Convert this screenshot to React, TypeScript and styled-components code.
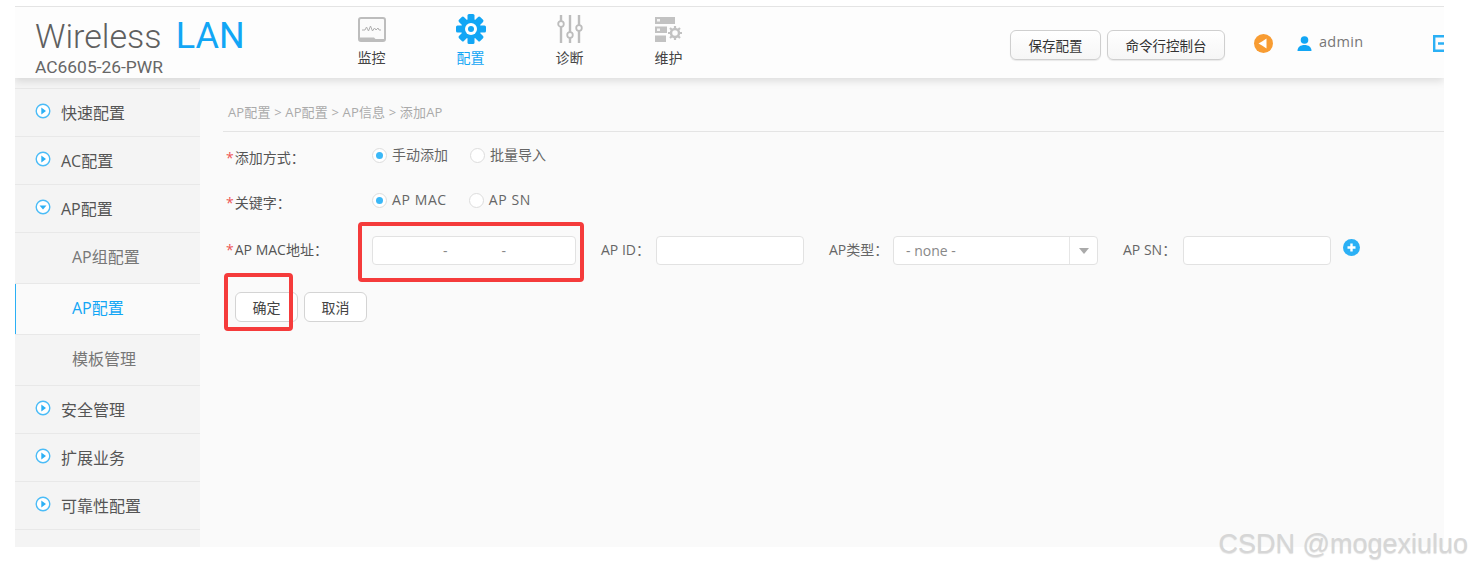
import { FC } from 'react';
import styled, { createGlobalStyle } from 'styled-components';

const BLUE = '#2bb0f5';
const CJK = "'Open Sans', 'Noto Sans CJK SC', sans-serif";

const GlobalStyle = createGlobalStyle`
  html, body {
    margin: 0;
    background: #fff;
    font-family: ${CJK};
  }
  * {
    box-sizing: border-box;
  }
`;

const Page = styled.div`
  position: relative;
  width: 1472px;
  height: 570px;
  overflow: hidden;
  padding: 6px 0 0 15px;
`;

const Frame = styled.div`
  width: 1429px;
  height: 541px;
  display: flex;
  flex-direction: column;
  overflow: hidden;
  border-top: 1px solid #e4e4e4;
`;

const Header = styled.header`
  position: relative;
  z-index: 1;
  height: 71px;
  flex: none;
  display: flex;
  background: #fdfdfd;
  box-shadow: 0 3px 8px rgba(0, 0, 0, 0.12);
`;

const Brand = styled.div`
  width: 307px;
  padding: 8px 0 0 20px;
`;

const BrandTitle = styled.div`
  font-family: Roboto, sans-serif;
  font-weight: 300;
  font-size: 34px;
  line-height: 42px;
  color: #5f5f5f;
  white-space: nowrap;
  span {
    color: #12a6f5;
    margin-left: 6px;
    font-size: 36px;
    font-weight: 400;
  }
`;

const BrandModel = styled.div`
  font-family: Roboto, sans-serif;
  font-size: 17.400px;
  line-height: 20px;
  color: #666;
`;

const Nav = styled.nav`
  display: flex;
  padding-top: 7px;
`;

const NavItem = styled.div<{ $active?: boolean }>`
  width: 99px;
  display: flex;
  flex-direction: column;
  align-items: center;
  font-size: 14px;
  line-height: 20px;
  color: ${(p) => (p.$active ? '#12a6f5' : '#444')};
`;

const NavIcon = styled.div`
  height: 30px;
  margin-bottom: 4px;
  display: flex;
  align-items: center;
  justify-content: center;
`;

const Tools = styled.div`
  margin-left: auto;
  display: flex;
  align-items: center;
  padding-top: 4px;
  width: 434px;
  flex: none;
`;

const ToolButton = styled.button<{ $w: number }>`
  width: ${(p) => p.$w}px;
  height: 30px;
  flex: none;
  margin-right: 6px;
  padding: 0;
  border: 1px solid #cfcfcf;
  border-radius: 6px;
  background: linear-gradient(#fff, #f6f6f6);
  box-shadow: 0 1px 1px rgba(0, 0, 0, 0.08);
  font-family: ${CJK};
  font-size: 13.500px;
  color: #333;
`;

const SpeakerSvg = styled.svg`
  width: 19px;
  height: 19px;
  flex: none;
  margin: -3px 0 0 23px;
`;

const UserSvg = styled.svg`
  width: 15px;
  height: 15px;
  flex: none;
  margin: -3px 0 0 24px;
`;

const UserName = styled.span`
  font-size: 14.500px;
  line-height: 20px;
  color: #777;
  margin: -5px 0 0 7px;
  letter-spacing: 0.3px;
`;

const LogoutSvg = styled.svg`
  width: 17px;
  height: 17px;
  flex: none;
  margin: -3px 0 0 70px;
`;

const Body = styled.div`
  flex: 1;
  display: flex;
  min-height: 0;
`;

const Sidebar = styled.aside`
  width: 185px;
  flex: none;
  background: #f4f4f4;
  padding-top: 10px;
`;

const MenuRow = styled.div<{ $sub?: boolean; $active?: boolean }>`
  display: flex;
  align-items: center;
  height: ${(p) => (p.$sub ? 51 : 48)}px;
  padding-left: ${(p) => (p.$sub ? 57 : 20)}px;
  padding-bottom: ${(p) => (p.$sub ? 5 : 1)}px;
  border-top: 1px solid #e8e8e8;
  background: ${(p) => (p.$active ? '#fafafa' : 'transparent')};
  box-shadow: ${(p) => (p.$active ? `inset 1px 0 0 ${BLUE}` : 'none')};
  font-size: 16px;
  color: ${(p) => (p.$active ? '#12a6f5' : p.$sub ? '#777' : '#555')};
  &:last-child {
    border-bottom: 1px solid #e8e8e8;
    height: 49px;
  }
`;

const MenuIcon = styled.svg`
  width: 16px;
  height: 16px;
  margin: -3px 10px 0 0;
  flex: none;
`;

const Content = styled.main`
  flex: 1;
  background: #fafafa;
  padding-left: 23px;
`;

const Breadcrumb = styled.div`
  height: 54px;
  padding: 25px 0 0 5px;
  font-size: 13px;
  line-height: 18px;
  letter-spacing: 0.15px;
  color: #aaa;
  border-bottom: 1px solid #e4e4e4;
  margin-bottom: 12px;
`;

const Row = styled.div<{ $h: number }>`
  display: flex;
  align-items: flex-start;
  height: ${(p) => p.$h}px;
`;

const RowLabel = styled.label`
  width: 149px;
  flex: none;
  padding: 5px 0 0 3px;
  font-size: 14px;
  line-height: 18px;
  color: #555;
  white-space: nowrap;
  em {
    color: #e55;
    font-style: normal;
    margin-right: 1px;
  }
`;

const RadioGroup = styled.div`
  display: flex;
  align-items: center;
  height: 22px;
`;

const RadioDot = styled.span<{ $on?: boolean }>`
  width: 15px;
  height: 15px;
  margin-right: 5px;
  border: 1px solid #ddd;
  border-radius: 50%;
  background: #fff;
  display: flex;
  align-items: center;
  justify-content: center;
  &::after {
    content: '';
    width: 7px;
    height: 7px;
    border-radius: 50%;
    background: ${(p) => (p.$on ? '#3bb8f7' : 'transparent')};
  }
`;

const RadioText = styled.span<{ $latin?: boolean }>`
  font-size: 14px;
  line-height: 18px;
  letter-spacing: ${(p) => (p.$latin ? 0.6 : 0)}px;
  color: #666;
  margin-right: 22px;
  white-space: nowrap;
`;

const TextBox = styled.div<{ $w: number }>`
  width: ${(p) => p.$w}px;
  height: 29px;
  flex: none;
  display: flex;
  align-items: center;
  background: #fff;
  border: 1px solid #e2e2e2;
  border-radius: 4px;
  font-size: 14px;
  color: #888;
`;

const MacDash = styled.span<{ $left: number }>`
  margin-left: ${(p) => p.$left}px;
`;

const FieldLabel = styled.label<{ $w: number; $gap: number }>`
  width: ${(p) => p.$w}px;
  margin-left: ${(p) => p.$gap}px;
  flex: none;
  font-size: 14px;
  line-height: 28px;
  color: #666;
  white-space: nowrap;
`;

const SelectValue = styled.span`
  flex: 1;
  padding-left: 12px;
`;

const SelectArrow = styled.span`
  width: 28px;
  height: 100%;
  border-left: 1px solid #e6e6e6;
  display: flex;
  align-items: center;
  justify-content: center;
  &::after {
    content: '';
    border: 5px solid transparent;
    border-top: 6px solid #aaa;
    border-bottom: 0;
  }
`;

const AddIcon = styled.svg`
  width: 17px;
  height: 17px;
  margin: 3px 0 0 12px;
`;

const Actions = styled.div`
  display: flex;
  gap: 6px;
  padding: 8px 0 0 12px;
`;

const ActionButton = styled.button`
  width: 63px;
  height: 30px;
  padding: 0;
  border: 1px solid #d4d4d4;
  border-radius: 6px;
  background: #fff;
  font-family: ${CJK};
  font-size: 14px;
  color: #444;
`;

const Highlight = styled.div<{ $x: number; $y: number; $w: number; $h: number }>`
  position: absolute;
  left: ${(p) => p.$x}px;
  top: ${(p) => p.$y}px;
  width: ${(p) => p.$w}px;
  height: ${(p) => p.$h}px;
  border: 4px solid #f53b3b;
  border-radius: 4px;
`;

const Watermark = styled.div`
  position: absolute;
  right: 4px;
  bottom: 10px;
  font-family: 'Liberation Sans', sans-serif;
  font-size: 27px;
  line-height: 32px;
  color: #d6d6d6;
  text-shadow: 0 1px 1px rgba(0, 0, 0, 0.12);
  white-space: nowrap;
`;

const MonitorGlyph: FC = () => (
  <svg width="28" height="25" viewBox="0 0 28 25" fill="none">
    <rect x="1" y="1" width="26" height="23" rx="2" fill="#fbfbfb" stroke="#bdbdbd" strokeWidth="2" />
    <path d="M4 13h3l1.500-3 2 4 2-5 2 5 2-3 1.500 2 2-2 1 2h2" stroke="#b0b0b0" strokeWidth="1" />
    <path d="M1 20.500h15l1.500 1.500h9.500v2H1z" fill="#bdbdbd" />
  </svg>
);

const GearGlyph: FC = () => (
  <svg width="30" height="30" viewBox="0 0 30 30">
    {[0, 45, 90, 135].map((a) => (
      <rect key={a} x="11.500" y="0" width="7" height="30" rx="1.500" fill="#12a6f5" transform={`rotate(${a} 15 15)`} />
    ))}
    <circle cx="15" cy="15" r="10" fill="#12a6f5" />
    <circle cx="15" cy="15" r="6" fill="#fff" />
    <circle cx="15" cy="15" r="3" fill="#12a6f5" />
  </svg>
);

const SlidersGlyph: FC = () => (
  <svg width="26" height="28" viewBox="0 0 26 28" fill="none" stroke="#bdbdbd" strokeWidth="2.400">
    <path d="M4 0v6M4 12v16M13 0v17M13 23v5M22 0v10M22 16v12" />
    <circle cx="4" cy="9" r="2.800" strokeWidth="1.800" />
    <circle cx="13" cy="20" r="2.800" strokeWidth="1.800" />
    <circle cx="22" cy="13" r="2.800" strokeWidth="1.800" />
  </svg>
);

const MaintainGlyph: FC = () => (
  <svg width="28" height="25" viewBox="0 0 28 25">
    <path d="M0 0h20v7H0zM0 9.500h12v6.500H0zM0 18.500h11v6.500H0z" fill="#c2c2c2" />
    <path d="M2 2h3v2.500H2zM2 11.500h3v2.500H2z" fill="#f5f5f5" />
    <circle cx="20" cy="16" r="4" fill="none" stroke="#c2c2c2" strokeWidth="2.500" />
    <path
      d="M20 9v3M20 20v3M13 16h3M24 16h3M15 11l2 2M23 19l2 2M15 21l2-2M23 13l2-2"
      stroke="#c2c2c2"
      strokeWidth="2.200"
    />
  </svg>
);

const CircleArrow: FC<{ open?: boolean }> = ({ open }) => (
  <MenuIcon viewBox="0 0 16 16">
    <circle cx="8" cy="8" r="6.800" fill="#fff" stroke="#4bbcf7" strokeWidth="1.400" />
    <path d={open ? 'M4.500 6.500h7L8 10.500z' : 'M6.300 4.500v7l4.700-3.500z'} fill="#2bb0f5" />
  </MenuIcon>
);

const menu = [
  { text: '快速配置' },
  { text: 'AC配置' },
  { text: 'AP配置', open: true },
  { text: 'AP组配置', sub: true },
  { text: 'AP配置', sub: true, active: true },
  { text: '模板管理', sub: true },
  { text: '安全管理' },
  { text: '扩展业务' },
  { text: '可靠性配置' },
];

const App: FC = () => (
  <Page>
    <GlobalStyle />
    <Frame>
      <Header>
        <Brand>
          <BrandTitle>
            Wireless <span>LAN</span>
          </BrandTitle>
          <BrandModel>AC6605-26-PWR</BrandModel>
        </Brand>
        <Nav>
          <NavItem>
            <NavIcon>
              <MonitorGlyph />
            </NavIcon>
            监控
          </NavItem>
          <NavItem $active>
            <NavIcon>
              <GearGlyph />
            </NavIcon>
            配置
          </NavItem>
          <NavItem>
            <NavIcon>
              <SlidersGlyph />
            </NavIcon>
            诊断
          </NavItem>
          <NavItem>
            <NavIcon>
              <MaintainGlyph />
            </NavIcon>
            维护
          </NavItem>
        </Nav>
        <Tools>
          <ToolButton $w={91}>保存配置</ToolButton>
          <ToolButton $w={118}>命令行控制台</ToolButton>
          <SpeakerSvg viewBox="0 0 19 19">
            <circle cx="9.500" cy="9.500" r="9.500" fill="#f89c32" />
            <path d="M4.500 9.500L8 7.500l4.500-3v10l-4.500-3z" fill="#fff" />
          </SpeakerSvg>
          <UserSvg viewBox="0 0 15 15">
            <circle cx="7.500" cy="4" r="3.800" fill="#12a6f5" />
            <path d="M0.500 15c0-4 3-6 7-6s7 2 7 6z" fill="#12a6f5" />
          </UserSvg>
          <UserName>admin</UserName>
          <LogoutSvg viewBox="0 0 17 17" fill="none" stroke="#2bb0f5" strokeWidth="2.400">
            <path d="M15 5V1.200H1.200v14.600H15V12" />
            <path d="M5 8.500h11M12 5.500l3 3-3 3" />
          </LogoutSvg>
        </Tools>
      </Header>
      <Body>
        <Sidebar>
          {menu.map((m, i) => (
            <MenuRow key={i} $sub={m.sub} $active={m.active}>
              {!m.sub && <CircleArrow open={m.open} />}
              {m.text}
            </MenuRow>
          ))}
        </Sidebar>
        <Content>
          <Breadcrumb>AP配置 &gt; AP配置 &gt; AP信息 &gt; 添加AP</Breadcrumb>
          <Row $h={45}>
            <RowLabel>
              <em>*</em>添加方式：
            </RowLabel>
            <RadioGroup>
              <RadioDot $on />
              <RadioText>手动添加</RadioText>
              <RadioDot />
              <RadioText>批量导入</RadioText>
            </RadioGroup>
          </Row>
          <Row $h={47}>
            <RowLabel>
              <em>*</em>关键字：
            </RowLabel>
            <RadioGroup>
              <RadioDot $on />
              <RadioText $latin>AP MAC</RadioText>
              <RadioDot />
              <RadioText $latin>AP SN</RadioText>
            </RadioGroup>
          </Row>
          <Row $h={48}>
            <RowLabel>
              <em>*</em>AP MAC地址：
            </RowLabel>
            <TextBox $w={204}>
              <MacDash $left={70}>-</MacDash>
              <MacDash $left={54}>-</MacDash>
            </TextBox>
            <FieldLabel $w={55} $gap={25}>
              AP ID：
            </FieldLabel>
            <TextBox $w={148} />
            <FieldLabel $w={64} $gap={25}>
              AP类型：
            </FieldLabel>
            <TextBox $w={205}>
              <SelectValue>- none -</SelectValue>
              <SelectArrow />
            </TextBox>
            <FieldLabel $w={60} $gap={25}>
              AP SN：
            </FieldLabel>
            <TextBox $w={148} />
            <AddIcon viewBox="0 0 17 17">
              <circle cx="8.500" cy="8.500" r="8.500" fill="#2bb0f5" />
              <path d="M8.500 4.500v8M4.500 8.500h8" stroke="#fff" strokeWidth="2.400" />
            </AddIcon>
          </Row>
          <Actions>
            <ActionButton>确定</ActionButton>
            <ActionButton>取消</ActionButton>
          </Actions>
        </Content>
      </Body>
    </Frame>
    <Highlight $x={358} $y={222} $w={226} $h={60} />
    <Highlight $x={224} $y={273} $w={69} $h={58} />
    <Watermark>CSDN @mogexiuluo</Watermark>
  </Page>
);

export default App;
